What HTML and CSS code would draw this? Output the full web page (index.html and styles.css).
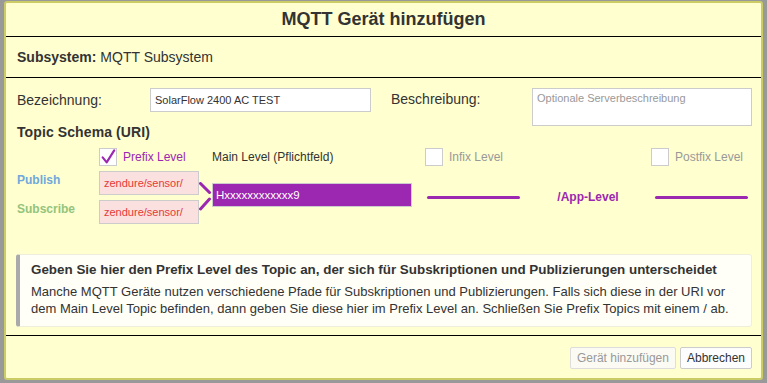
FILE: index.html
```html
<!DOCTYPE html>
<html lang="de">
<head>
<meta charset="utf-8">
<title>MQTT Gerät hinzufügen</title>
<link rel="stylesheet" href="styles.css">
</head>
<body>
<div class="dialog">
  <div class="dlg-header">MQTT Gerät hinzufügen</div>
  <div class="dlg-sub"><b>Subsystem:</b> MQTT Subsystem</div>
  <div class="dlg-body">
    <div class="row-fields">
      <label class="lbl lbl-name">Bezeichnung:</label>
      <input class="inp-name" type="text" value="SolarFlow 2400 AC TEST">
      <label class="lbl lbl-desc">Beschreibung:</label>
      <textarea class="inp-desc" placeholder="Optionale Serverbeschreibung"></textarea>
    </div>
    <div class="schema-title">Topic Schema (URI)</div>
    <div class="schema">
      <div class="cb-cell c2">
        <span class="cb checked"><svg width="18" height="18" viewBox="0 0 18 18"><path d="M3 9.5 L7.5 15 L16 1.5" fill="none" stroke="#9c27b0" stroke-width="2.4" stroke-linecap="round" stroke-linejoin="round"/></svg></span>
        <span class="cb-lbl purple">Prefix Level</span>
      </div>
      <div class="cb-cell c4"><span class="main-lbl">Main Level (Pflichtfeld)</span></div>
      <div class="cb-cell c6"><span class="cb"></span><span class="cb-lbl grey">Infix Level</span></div>
      <div class="cb-cell c8"><span class="cb"></span><span class="cb-lbl grey">Postfix Level</span></div>

      <div class="side pub">Publish</div>
      <div class="pre pre1">zendure/sensor/</div>
      <div class="side sub">Subscribe</div>
      <div class="pre pre2">zendure/sensor/</div>
      <svg class="conn" width="13" height="30" viewBox="0 0 13 30"><path d="M1.5 1.5 L10.5 10.5 M10.5 17 L1.5 27" stroke="#9c27b0" stroke-width="3" stroke-linecap="round" fill="none"/></svg>
      <div class="main">Hxxxxxxxxxxxx9</div>
      <div class="line l6"></div>
      <div class="app">/App-Level</div>
      <div class="line l8"></div>
    </div>
    <div class="info">
      <div class="info-title">Geben Sie hier den Prefix Level des Topic an, der sich für Subskriptionen und Publizierungen unterscheidet</div>
      <div class="info-text">Manche MQTT Geräte nutzen verschiedene Pfade für Subskriptionen und Publizierungen. Falls sich diese in der URI vor dem Main Level Topic befinden, dann geben Sie diese hier im Prefix Level an. Schließen Sie Prefix Topics mit einem / ab.</div>
    </div>
  </div>
  <div class="dlg-footer">
    <button class="btn" disabled>Gerät hinzufügen</button>
    <button class="btn">Abbrechen</button>
  </div>
</div>
</body>
</html>
```
FILE: styles.css
```css
html, body { margin: 0; padding: 0; }
body {
  background: #999999;
  font-family: "Liberation Sans", Arial, sans-serif;
  color: #333;
  width: 767px;
  height: 383px;
  overflow: hidden;
}
.dialog {
  margin: 1px 0 0 4px;
  width: 755px;
  height: 375px;
  border: 2px solid #cccc66;
  border-radius: 3px;
  background: #ffffd0;
  display: flex;
  flex-direction: column;
}
.dlg-header {
  height: 33px;
  border-bottom: 1px solid #000;
  display: flex;
  align-items: center;
  justify-content: center;
  font-weight: bold;
  font-size: 18px;
  color: #333;
}
.dlg-sub {
  height: 40px;
  border-bottom: 1px solid #000;
  display: flex;
  align-items: center;
  padding-left: 11px;
  font-size: 14px;
  gap: 4px;
}
.dlg-sub b { font-weight: bold; }
.dlg-body {
  height: 257px;
  padding: 10px 9px 0 11px;
  box-sizing: border-box;
}
.row-fields {
  display: flex;
  align-items: flex-start;
  height: 38px;
}
.lbl {
  font-size: 14px;
  line-height: 24px;
  color: #333;
}
.lbl-name { width: 133px; }
.lbl-desc { width: 141px; margin-left: 20px; line-height: 22px; }
.inp-name {
  width: 221px;
  height: 24px;
  box-sizing: border-box;
  border: 1px solid #ccc;
  background: #fff;
  font-family: "Liberation Sans", Arial, sans-serif;
  font-size: 11px;
  color: #333;
  padding: 0 4px;
  margin: 0;
}
.inp-desc {
  width: 220px;
  height: 38px;
  box-sizing: border-box;
  border: 1px solid #ccc;
  background: #fff;
  font-family: "Liberation Sans", Arial, sans-serif;
  font-size: 11px;
  padding: 3px 4px;
  margin: 0;
  resize: none;
}
.inp-desc::placeholder { color: #999; }
.schema-title {
  margin-top: -2px;
  font-weight: bold;
  font-size: 14px;
  line-height: 16px;
  letter-spacing: 0.1px;
}
.schema {
  margin-top: 7px;
  display: grid;
  grid-template-columns: 82px 100px 13px 200px 13px 97px 129px 101px;
  grid-template-rows: 19px 24px 24px;
  row-gap: 5px;
}
.cb-cell {
  grid-row: 1;
  display: flex;
  align-items: center;
  gap: 6px;
  font-size: 12px;
  white-space: nowrap;
}
.c2 { grid-column: 2 / 4; }
.c4 { grid-column: 4; }
.c6 { grid-column: 6 / 8; }
.c8 { grid-column: 8; }
.cb {
  width: 18px;
  height: 18px;
  box-sizing: border-box;
  border: 1px solid #ccc;
  background: #fff;
  display: inline-flex;
  align-items: center;
  justify-content: center;
  flex: none;
}
.cb svg { display: block; }
.purple { color: #9c27b0; }
.grey { color: #999; }
.main-lbl { color: #333; }
.side {
  grid-column: 1;
  font-weight: bold;
  font-size: 12px;
  line-height: 18px;
}
.pub { grid-row: 2; color: #6fa8dc; }
.sub { grid-row: 3; color: #93c47d; }
.pre {
  grid-column: 2;
  box-sizing: border-box;
  border: 1px solid #ccc;
  background: #fbe0e0;
  color: #e53935;
  font-size: 11px;
  line-height: 22px;
  padding-left: 4px;
  white-space: nowrap;
}
.pre1 { grid-row: 2; }
.pre2 { grid-row: 3; }
.conn {
  grid-column: 3;
  grid-row: 2 / 4;
  margin-top: 11px;
  display: block;
}
.main {
  grid-column: 4;
  grid-row: 2 / 4;
  align-self: start;
  margin-top: 12px;
  height: 24px;
  box-sizing: border-box;
  border: 1px solid #ccc;
  background: #9c27b0;
  color: #fff;
  font-size: 11.5px;
  line-height: 22px;
  padding-left: 3px;
}
.line {
  grid-row: 2 / 4;
  align-self: start;
  margin-top: 25px;
  height: 3px;
  border-radius: 2px;
  background: #9c27b0;
}
.l6 { grid-column: 6; margin-left: 2px; margin-right: 2px; }
.l8 { grid-column: 8; margin-left: 4px; margin-right: 4px; }
.app {
  grid-column: 7;
  grid-row: 2 / 4;
  align-self: start;
  margin-top: 19px;
  text-align: center;
  padding-left: 3px;
  color: #9c27b0;
  font-weight: bold;
  font-size: 12px;
  line-height: 15px;
}
.info {
  margin-top: 30px;
  margin-left: -1px;
  background: #fffff7;
  border: 1px solid #eeeedd;
  border-left: 4px solid #aaa;
  border-radius: 3px;
  padding: 7px 8px 9px 11px;
  font-size: 13px;
}
.info-title {
  font-weight: bold;
  font-size: 13.4px;
  line-height: 16px;
  margin-bottom: 5px;
  white-space: nowrap;
}
.info-text {
  line-height: 17px;
}
.dlg-footer {
  flex: 1;
  border-top: 1px solid #000;
  display: flex;
  justify-content: flex-end;
  align-items: flex-start;
  padding: 11px 9px 0 0;
  gap: 4px;
}
.btn {
  height: 22px;
  box-sizing: border-box;
  border: 1px solid #ccc;
  border-radius: 2px;
  background: #fdfdfd;
  font-family: "Liberation Sans", Arial, sans-serif;
  font-size: 12px;
  color: #333;
  padding: 0 6px;
  margin: 0;
}
.btn:disabled { color: #999; border-color: #ddd; background: #fbfbf4; }
```
